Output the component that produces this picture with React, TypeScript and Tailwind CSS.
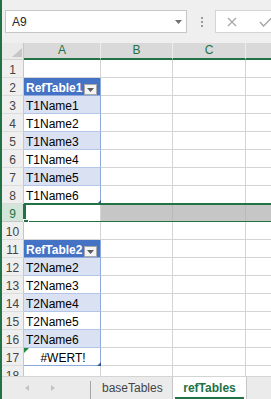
import React from 'react';

type Kind = 'empty' | 'head' | 'band' | 'plain' | 'sel';

interface Row {
  n: number;
  kind: Kind;
  text?: string;
  last?: boolean;
  err?: boolean;
}

const rows: Row[] = [
  { n: 1, kind: 'empty' },
  { n: 2, kind: 'head', text: 'RefTable1' },
  { n: 3, kind: 'band', text: 'T1Name1' },
  { n: 4, kind: 'plain', text: 'T1Name2' },
  { n: 5, kind: 'band', text: 'T1Name3' },
  { n: 6, kind: 'plain', text: 'T1Name4' },
  { n: 7, kind: 'band', text: 'T1Name5' },
  { n: 8, kind: 'plain', text: 'T1Name6', last: true },
  { n: 9, kind: 'sel' },
  { n: 10, kind: 'empty' },
  { n: 11, kind: 'head', text: 'RefTable2' },
  { n: 12, kind: 'band', text: 'T2Name2' },
  { n: 13, kind: 'plain', text: 'T2Name3' },
  { n: 14, kind: 'band', text: 'T2Name4' },
  { n: 15, kind: 'plain', text: 'T2Name5' },
  { n: 16, kind: 'band', text: 'T2Name6' },
  { n: 17, kind: 'plain', text: '#WERT!', last: true, err: true },
  { n: 18, kind: 'empty' },
];

function FilterButton() {
  return (
    <div className="w-[13px] h-[11px] bg-[#f4f4f4] border border-[#a9a9a9] flex items-center justify-center">
      <svg width="7" height="4" viewBox="0 0 7 4">
        <path d="M0 0h7L3.5 4z" fill="#595959" />
      </svg>
    </div>
  );
}

function cellA(row: Row) {
  switch (row.kind) {
    case 'head':
      return 'bg-[#4472c4] text-white font-bold justify-between pr-[3px] border-r-[#8ea9db] border-b-[#8ea9db]';
    case 'band':
      return `bg-[#d9e1f2] border-r-[#8ea9db] ${row.last ? 'border-b-[#8ea9db]' : 'border-b-[#b4c6e7]'}`;
    case 'plain':
      return `bg-white border-r-[#8ea9db] ${row.last ? 'border-b-[#8ea9db]' : 'border-b-[#b4c6e7]'}`;
    default:
      return 'bg-white border-r-[#d4d4d4] border-b-[#d4d4d4]';
  }
}

function SheetRow({ row }: { row: Row }) {
  const sel = row.kind === 'sel';
  const other = sel
    ? 'bg-[#c6c6c6] border-r-[#bababa] border-b-[#c6c6c6]'
    : 'bg-white border-r-[#d4d4d4] border-b-[#d4d4d4]';

  return (
    <div className="relative flex h-[18px] shrink-0">
      <div
        className={`w-[22px] shrink-0 flex items-end justify-center leading-[13px] border-r border-b ${
          sel ? 'bg-[#d3e5d9] text-[#217346] border-r-[#217346] border-b-[#c6c6c6]' : 'bg-[#efefef] text-[#444] border-r-[#c6c6c6] border-b-[#dcdcdc]'
        }`}
      >
        {row.n}
      </div>

      <div className={`relative w-[77px] shrink-0 flex items-end leading-[13px] pl-[2px] border-r border-b text-black ${cellA(row)} ${row.err ? 'justify-center' : ''}`}>
        {row.text && <span className={row.kind === 'head' ? 'text-white' : ''}>{row.text}</span>}
        {row.kind === 'head' && <FilterButton />}
        {row.err && (
          <svg className="absolute left-0 top-0" width="5" height="5" viewBox="0 0 5 5">
            <path d="M0 0h5L0 5z" fill="#1b8a3a" />
          </svg>
        )}
        {row.last && (
          <svg className="absolute -right-px -bottom-px" width="4" height="4" viewBox="0 0 4 4">
            <path d="M4 0v4H0z" fill="#2f5597" />
          </svg>
        )}
      </div>

      <div className={`w-[72px] shrink-0 border-r border-b ${other}`} />
      <div className={`w-[73px] shrink-0 border-r border-b ${other}`} />
      <div className={`flex-1 border-b ${other}`} />

      {sel && (
        <>
          <div className="absolute left-[22px] right-0 -top-px -bottom-px border-y-2 border-l-2 border-[#217346]" />
          <div className="absolute left-[21px] top-[15px] w-[6px] h-[6px] bg-[#217346] border border-white" />
        </>
      )}
    </div>
  );
}

export default function App() {
  return (
    <div className="w-[271px] h-[399px] flex flex-col overflow-hidden border-l-2 border-[#217346] bg-[#efefef] text-[12px] font-['Liberation_Sans',Arial,sans-serif]">
      {/* Name box / formula bar */}
      <div className="h-[43px] shrink-0 flex items-start pt-[10px] pl-[3px]">
        <div className="w-[182px] h-[23px] shrink-0 bg-white border border-[#c6c6c6] flex items-center justify-between pl-[6px] pr-[4px] text-[#262626]">
          <span>A9</span>
          <svg width="7" height="4" viewBox="0 0 7 4">
            <path d="M0 0h7L3.5 4z" fill="#707070" />
          </svg>
        </div>
        <div className="ml-[14px] h-[23px] flex flex-col items-center justify-center gap-[2px]">
          <div className="w-[2px] h-[2px] bg-[#9a9a9a]" />
          <div className="w-[2px] h-[2px] bg-[#9a9a9a]" />
          <div className="w-[2px] h-[2px] bg-[#9a9a9a]" />
        </div>
        <div className="ml-[12px] h-[23px] flex-1 bg-white border border-r-0 border-[#d4d4d4] flex items-center pl-[11px] gap-[22px]">
          <svg width="10" height="10" viewBox="0 0 10 10">
            <path d="M1 1l8 8M9 1l-8 8" stroke="#a6a6a6" strokeWidth="1.2" />
          </svg>
          <svg width="14" height="10" viewBox="0 0 14 10">
            <path d="M1 5l3.5 4L13 0.5" stroke="#a6a6a6" strokeWidth="1.4" fill="none" />
          </svg>
        </div>
      </div>

      {/* Column headers */}
      <div className="h-[17px] shrink-0 flex">
        <div className="w-[22px] shrink-0 flex items-end justify-end pr-[1px] pb-[2px] bg-[#e9e9e9] border-r border-b border-r-[#c6c6c6] border-b-[#d4d4d4]">
          <svg width="10" height="9" viewBox="0 0 10 9">
            <path d="M10 0v9H0z" fill="#c6c6c6" />
          </svg>
        </div>
        {['A', 'B', 'C'].map((c, i) => (
          <div
            key={c}
            className={`${i === 0 ? 'w-[77px]' : i === 1 ? 'w-[72px]' : 'w-[73px]'} shrink-0 flex items-center justify-center leading-[15px] bg-[#d9d9d9] text-[#217346] border-r border-b-2 border-r-[#ececec] border-b-[#217346]`}
          >
            {c}
          </div>
        ))}
        <div className="flex-1 bg-[#d9d9d9] border-b-2 border-b-[#217346]" />
      </div>

      {/* Grid */}
      <div className="flex-1 flex flex-col overflow-hidden">
        {rows.map((r) => (
          <SheetRow key={r.n} row={r} />
        ))}
      </div>

      {/* Sheet tabs */}
      <div className="h-[23px] shrink-0 flex bg-[#ebebeb] border-t border-[#d4d4d4]">
        <div className="w-[88px] shrink-0 flex items-center pl-[23px] gap-[22px]">
          <svg width="4" height="6" viewBox="0 0 4 6">
            <path d="M4 0v6L0 3z" fill="#c3c3c3" />
          </svg>
          <svg width="4" height="6" viewBox="0 0 4 6">
            <path d="M0 0v6l4-3z" fill="#c3c3c3" />
          </svg>
        </div>
        <div className="w-px mt-[4px] bg-[#a6a6a6]" />
        <div className="w-[82px] shrink-0 flex items-center pl-[11px] text-[#444] border-r border-[#c6c6c6]">baseTables</div>
        <div className="relative w-[74px] shrink-0 flex items-center justify-center bg-white font-bold text-[#217346] border-r border-[#c6c6c6]">
          refTables
          <div className="absolute left-[2px] right-[2px] bottom-0 h-[2px] bg-[#217346]" />
        </div>
        <div className="flex-1" />
      </div>
    </div>
  );
}
